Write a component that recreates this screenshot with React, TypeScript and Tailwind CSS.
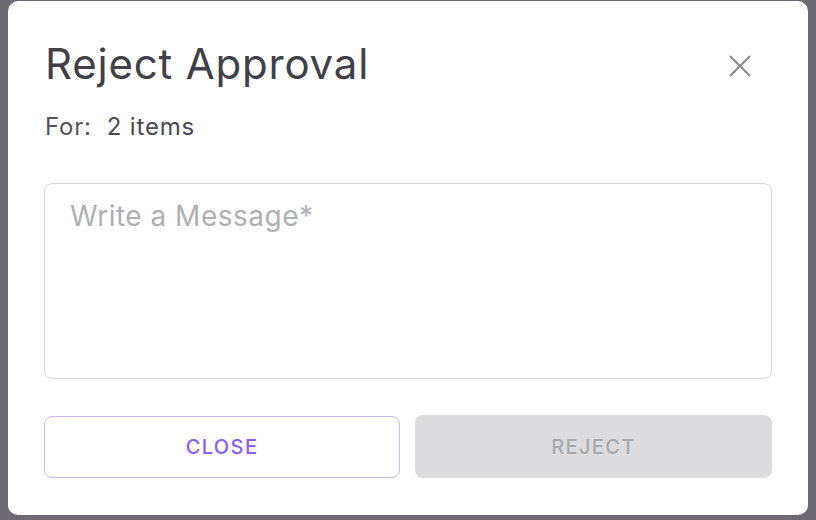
import React from "react";

export default function App() {
  return (
    <div
      className="w-[816px] h-[520px] bg-[#6d6a74] overflow-hidden pt-[1px] pl-[8px]"
      style={{ fontFamily: "Inter, 'Noto Sans', sans-serif" }}
    >
      <div className="w-[800px] h-[514px] bg-white rounded-[10px] px-[36px] pt-[39px] flex flex-col">
        <div className="flex items-start justify-between">
          <h1 className="text-[42px] leading-[48px] tracking-[0.8px] text-[#414049] font-normal pl-[1px]">
            Reject Approval
          </h1>
          <button className="mt-[15px] mr-[21px] w-[22px] h-[22px] flex items-center justify-center">
            <svg width="22" height="22" viewBox="0 0 22 22">
              <path d="M1 1 L21 21 M21 1 L1 21" stroke="#8a8a8f" strokeWidth="2.2" />
            </svg>
          </button>
        </div>
        <div className="mt-[23px] text-[24px] leading-[32px] tracking-[0.8px] text-[#55545c] pl-[1px]">
          For:&nbsp; <span className="text-[#4a4951]">2 items</span>
        </div>
        <textarea
          className="mt-[40px] h-[196px] w-full border border-[#d6d6da] rounded-[8px] px-[25px] py-[14px] text-[28px] leading-[36px] tracking-[0.5px] resize-none outline-none placeholder:text-[#afafb3] text-[#414049]"
          placeholder="Write a Message*"
        />
        <div className="mt-[37px] flex gap-[15px]">
          <button className="w-[356px] h-[62px] rounded-[8px] border border-[#c9b6fb] text-[#8b5cf6] text-[20px] font-medium tracking-[1.4px]">
            CLOSE
          </button>
          <button className="flex-1 h-[63px] -mt-[1px] rounded-[8px] bg-[#dcdcdf] text-[#a9a9ad] text-[20px] font-medium tracking-[1.4px]">
            REJECT
          </button>
        </div>
      </div>
    </div>
  );
}
